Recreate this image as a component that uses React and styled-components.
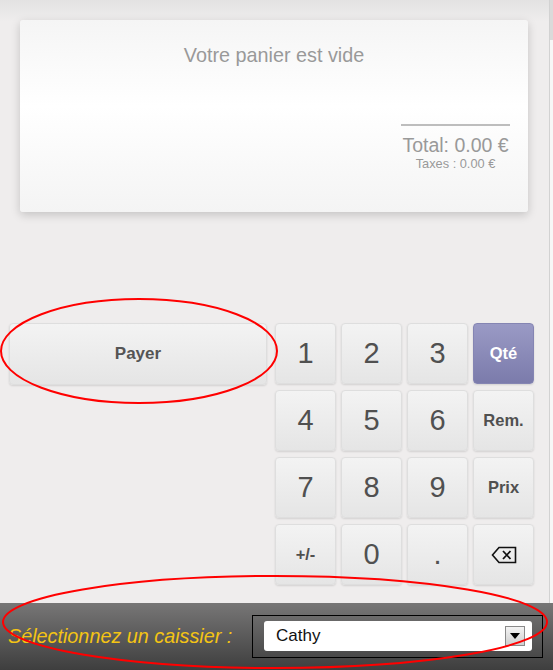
import React from 'react';
import styled, { createGlobalStyle } from 'styled-components';

const GlobalStyle = createGlobalStyle`
    body {
        margin: 0;
        background: #efeded;
        font-family: "Liberation Sans", Arial, sans-serif;
    }
`;

const Screen = styled.div`
    position: relative;
    width: 553px;
    height: 670px;
    display: flex;
    flex-direction: column;
    overflow: hidden;
`;

const Workspace = styled.div`
    flex: 1;
    display: flex;
    background: linear-gradient(#e3e2e2 0, #efeded 22px);
`;

const Content = styled.div`
    flex: 1;
    display: flex;
    flex-direction: column;
    padding: 20px 0 18px;
`;

const ScrollTrack = styled.div`
    width: 3px;
    border-left: 1px solid #d2d2d2;
    background: linear-gradient(#dadada 0, #dadada 40px, #f7f7f7 40px);
`;

const Card = styled.div`
    margin: 0 21px 0 20px;
    height: 192px;
    box-sizing: border-box;
    padding: 23px 18px 0 0;
    display: flex;
    flex-direction: column;
    border-radius: 3px;
    background: linear-gradient(#f5f5f5, #ffffff 45%, #f4f4f4);
    box-shadow: 0 3px 10px rgba(0, 0, 0, 0.18);
`;

const EmptyTitle = styled.div`
    padding-left: 18px;
    text-align: center;
    font-size: 19.8px;
    line-height: 24px;
    color: #999;
`;

const Totals = styled.div`
    align-self: flex-end;
    width: 109px;
    margin-top: 57px;
    border-top: 2px solid #bdbdbd;
    text-align: center;
    color: #999;
`;

const TotalLine = styled.div`
    margin-top: 8px;
    font-size: 19.5px;
    line-height: 22px;
`;

const TaxLine = styled.div`
    font-size: 12.8px;
    line-height: 15px;
`;

const Pads = styled.div`
    margin-top: auto;
    display: flex;
    align-items: flex-start;
    gap: 8px;
    padding-left: 9px;
`;

const Key = styled.button`
    box-sizing: border-box;
    border: 1px solid #dedede;
    border-radius: 4px;
    background: linear-gradient(#f3f3f3, #e5e5e5);
    box-shadow: 0 1px 2px rgba(0, 0, 0, 0.12);
    color: #555;
    font-family: "Liberation Sans", Arial, sans-serif;
    display: flex;
    align-items: center;
    justify-content: center;
    padding: 0;
    cursor: pointer;
`;

const PayButton = styled(Key)`
    width: 258px;
    height: 62px;
    font-size: 17px;
    font-weight: bold;
`;

const Keypad = styled.div`
    display: grid;
    grid-template-columns: repeat(4, 61px);
    grid-auto-rows: 61px;
    gap: 6px 5px;
`;

const PadKey = styled(Key)`
    font-size: ${p => (p.$small ? '16.5px' : '29px')};
    font-weight: ${p => (p.$small ? 'bold' : 'normal')};
    color: #505050;
    ${p => p.$active && `
        background: linear-gradient(#9a9ac5, #7b7bab);
        border-color: #8585b3;
        color: #fff;
    `}
`;

const CashierBar = styled.div`
    height: 67px;
    display: flex;
    align-items: center;
    justify-content: space-between;
    padding: 0 10px 0 8px;
    background: linear-gradient(#777676, #3e3e3e);
`;

const CashierLabel = styled.span`
    font-style: italic;
    font-size: 19.8px;
    color: #f4c414;
`;

const SelectFrame = styled.div`
    box-sizing: border-box;
    width: 291px;
    height: 43px;
    border: 1px solid #000;
    padding: 5px 10px 6px 11px;
`;

const FakeSelect = styled.div`
    height: 30px;
    display: flex;
    align-items: center;
    justify-content: space-between;
    padding: 0 7px 0 12px;
    border-radius: 3px;
    background: #fff;
    font-size: 17px;
    color: #111;
`;

const ArrowBox = styled.span`
    box-sizing: border-box;
    width: 20px;
    height: 20px;
    border: 1px solid #8a8a8a;
    background: linear-gradient(#f4f4f4, #cfcfcf);
    display: flex;
    align-items: center;
    justify-content: center;
`;

const Annotations = styled.svg`
    position: absolute;
    left: 0;
    top: 0;
    pointer-events: none;
`;

const BackspaceIcon = () => (
    <svg width="26" height="18" viewBox="0 0 26 18">
        <path d="M8 1.5 H24.5 V16.5 H8 L1.5 9 Z" fill="none" stroke="#111" strokeWidth="1.6" strokeLinejoin="miter" />
        <path d="M12 5 L19.5 13 M19.5 5 L12 13" stroke="#111" strokeWidth="1.8" />
    </svg>
);

const keys = [
    { label: '1' }, { label: '2' }, { label: '3' }, { label: 'Qté', small: true, active: true },
    { label: '4' }, { label: '5' }, { label: '6' }, { label: 'Rem.', small: true },
    { label: '7' }, { label: '8' }, { label: '9' }, { label: 'Prix', small: true },
    { label: '+/-', small: true }, { label: '0' }, { label: '.' }, { icon: true },
];

const App = () => {
    return (
        <Screen>
            <GlobalStyle />
            <Workspace>
                <Content>
                    <Card>
                        <EmptyTitle>Votre panier est vide</EmptyTitle>
                        <Totals>
                            <TotalLine>Total: 0.00 €</TotalLine>
                            <TaxLine>Taxes : 0.00 €</TaxLine>
                        </Totals>
                    </Card>
                    <Pads>
                        <PayButton>Payer</PayButton>
                        <Keypad>
                            {keys.map((k, i) => (
                                <PadKey key={i} $small={k.small} $active={k.active}>
                                    {k.icon ? <BackspaceIcon /> : k.label}
                                </PadKey>
                            ))}
                        </Keypad>
                    </Pads>
                </Content>
                <ScrollTrack />
            </Workspace>
            <CashierBar>
                <CashierLabel>Sélectionnez un caissier :</CashierLabel>
                <SelectFrame>
                    <FakeSelect>
                        Cathy
                        <ArrowBox>
                            <svg width="10" height="6" viewBox="0 0 10 6">
                                <path d="M0 0 H10 L5 6 Z" fill="#000" />
                            </svg>
                        </ArrowBox>
                    </FakeSelect>
                </SelectFrame>
            </CashierBar>
            <Annotations width="553" height="670">
                <ellipse cx="139" cy="351" rx="138" ry="52" fill="none" stroke="#f00" strokeWidth="2" />
                <ellipse cx="275" cy="622" rx="272" ry="46" fill="none" stroke="#f00" strokeWidth="2" />
            </Annotations>
        </Screen>
    );
};

export default App;
